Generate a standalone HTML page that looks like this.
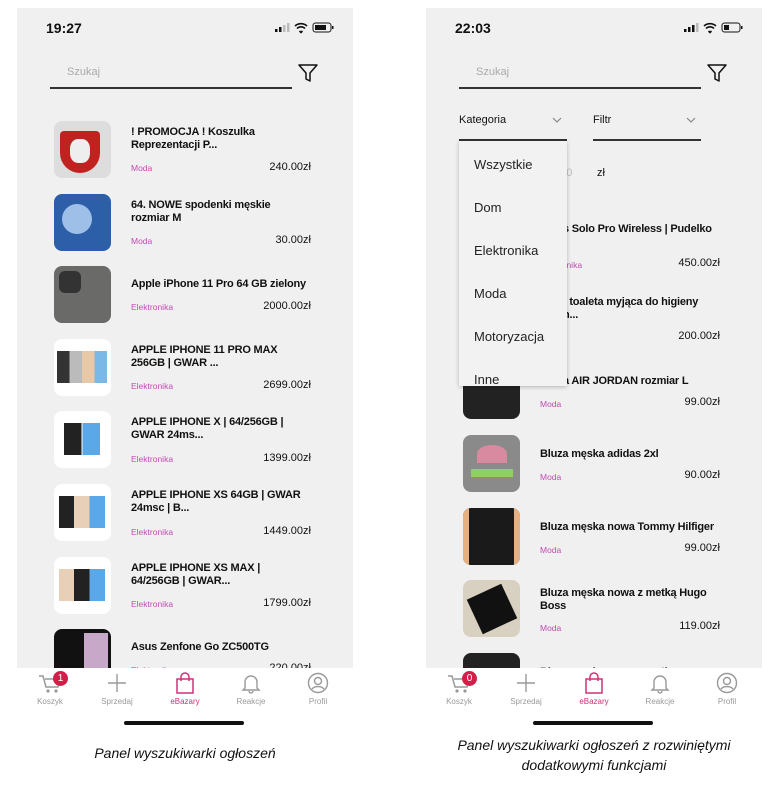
<!DOCTYPE html>
<html><head><meta charset="utf-8"><style>
*{margin:0;padding:0;box-sizing:border-box}
body{width:782px;height:795px;background:#fff;position:relative;overflow:hidden;font-family:"Liberation Sans",sans-serif;color:#111}
.ph{position:absolute;top:8px;width:336px;height:660px;background:#f0f0f0;overflow:hidden}
.a{position:absolute}
.time{font-size:14px;font-weight:bold;top:12px;left:29px}
.srch{font-size:11px;color:#aaa;top:58px;left:50px}
.ul{height:2px;background:#333}
.th{position:absolute;width:57px;height:57px;border-radius:8px;overflow:hidden}
.tt{position:absolute;font-size:11px;font-weight:bold;line-height:13px;width:230px;letter-spacing:-0.2px;white-space:nowrap}
.cat{position:absolute;font-size:8.5px;color:#c04cb4}
.pr{position:absolute;font-size:11px;text-align:right;width:80px}
.tab{position:absolute;top:668px;width:336px;height:60px;background:#fff}
.ti{position:absolute;top:4px;width:50px;text-align:center;font-size:8px;color:#999}
.ti svg{display:block;margin:0 auto 3px}
.hb{position:absolute;top:53px;left:107px;width:120px;height:4px;border-radius:2px;background:#111}
.cap{position:absolute;font-style:italic;font-size:14px;text-align:center;color:#111;white-space:nowrap}
</style></head><body>

<!-- LEFT PHONE -->
<div class="ph" style="left:17px">
 <div class="a time">19:27</div>
 <svg class="a" style="left:258px;top:14px" width="62" height="12"><rect x="0" y="7" width="2.5" height="3" fill="#111"/><rect x="4" y="5" width="2.5" height="5" fill="#111"/><rect x="8" y="3" width="2.5" height="7" fill="#bbb"/><rect x="12" y="1" width="2.5" height="9" fill="#bbb"/><path d="M20 4a9 9 0 0 1 12 0M22 6.5a5.5 5.5 0 0 1 8 0M24.5 9l1.5 1.5 1.5-1.5" stroke="#111" stroke-width="1.6" fill="none"/><rect x="38" y="1" width="18" height="9" rx="2.5" stroke="#111" fill="none"/><rect x="40" y="3" width="11" height="5" fill="#111"/><rect x="57" y="4" width="1.5" height="3" fill="#111"/></svg>
 <div class="a srch">Szukaj</div>
 <div class="a ul" style="left:33px;top:79px;width:242px"></div>
 <svg class="a" style="left:280px;top:54px" width="22" height="22"><path d="M2 3h18l-7 8v8l-4-2v-6z" fill="none" stroke="#111" stroke-width="1.5" stroke-linejoin="round"/></svg>

 <div class="th" style="left:37px;top:113px;background:#ddd"><div class="a" style="left:6px;top:10px;width:40px;height:42px;background:#c0231f;border-radius:4px 4px 20px 20px"></div><div class="a" style="left:16px;top:18px;width:20px;height:24px;background:#eee;border-radius:40%"></div></div>
 <div class="tt" style="left:114px;top:118px">! PROMOCJA ! Koszulka<br>Reprezentacji P...</div>
 <div class="cat" style="left:114px;top:155px">Moda</div><div class="pr" style="left:214px;top:153px">240.00zł</div>

 <div class="th" style="left:37px;top:186px;background:#2d5fa8"><div class="a" style="left:8px;top:10px;width:30px;height:30px;background:#9ec0e8;border-radius:50%"></div></div>
 <div class="tt" style="left:114px;top:191px">64. NOWE spodenki męskie<br>rozmiar M</div>
 <div class="cat" style="left:114px;top:228px">Moda</div><div class="pr" style="left:214px;top:226px">30.00zł</div>

 <div class="th" style="left:37px;top:258px;background:#6a6a68"><div class="a" style="left:5px;top:5px;width:22px;height:22px;background:#333;border-radius:6px"></div></div>
 <div class="tt" style="left:114px;top:270px">Apple iPhone 11 Pro 64 GB zielony</div>
 <div class="cat" style="left:114px;top:294px">Elektronika</div><div class="pr" style="left:214px;top:292px">2000.00zł</div>

 <div class="th" style="left:37px;top:331px;background:#fff"><div class="a" style="left:3px;top:12px;width:50px;height:32px;background:linear-gradient(90deg,#333 0 25%,#bbb 25% 50%,#e9c8a8 50% 75%,#7ab8e8 75%)"></div></div>
 <div class="tt" style="left:114px;top:336px">APPLE IPHONE 11 PRO MAX<br>256GB | GWAR ...</div>
 <div class="cat" style="left:114px;top:373px">Elektronika</div><div class="pr" style="left:214px;top:371px">2699.00zł</div>

 <div class="th" style="left:37px;top:403px;background:#fff"><div class="a" style="left:10px;top:12px;width:36px;height:32px;background:linear-gradient(90deg,#222 0 48%,#fff 48% 52%,#5aa8e8 52%)"></div></div>
 <div class="tt" style="left:114px;top:408px">APPLE IPHONE X | 64/256GB |<br>GWAR 24ms...</div>
 <div class="cat" style="left:114px;top:446px">Elektronika</div><div class="pr" style="left:214px;top:444px">1399.00zł</div>

 <div class="th" style="left:37px;top:476px;background:#fff"><div class="a" style="left:5px;top:12px;width:46px;height:32px;background:linear-gradient(90deg,#222 0 33%,#e8d0b8 33% 66%,#5aa8e8 66%)"></div></div>
 <div class="tt" style="left:114px;top:481px">APPLE IPHONE XS 64GB | GWAR<br>24msc | B...</div>
 <div class="cat" style="left:114px;top:519px">Elektronika</div><div class="pr" style="left:214px;top:517px">1449.00zł</div>

 <div class="th" style="left:37px;top:549px;background:#fff"><div class="a" style="left:5px;top:12px;width:46px;height:32px;background:linear-gradient(90deg,#e8d0b8 0 33%,#222 33% 66%,#5aa8e8 66%)"></div></div>
 <div class="tt" style="left:114px;top:554px">APPLE IPHONE XS MAX |<br>64/256GB | GWAR...</div>
 <div class="cat" style="left:114px;top:591px">Elektronika</div><div class="pr" style="left:214px;top:589px">1799.00zł</div>

 <div class="th" style="left:37px;top:621px;background:#111"><div class="a" style="left:30px;top:4px;width:24px;height:50px;background:#c8a8c8"></div></div>
 <div class="tt" style="left:114px;top:633px">Asus Zenfone Go ZC500TG</div>
 <div class="cat" style="left:114px;top:657px">Elektronika</div><div class="pr" style="left:214px;top:654px">220.00zł</div>
</div>
<div class="tab" style="left:17px">
 <div class="ti" style="left:8px"><svg width="26" height="22"><path d="M2 4h4l3 11h12l2-8H8" fill="none" stroke="#999" stroke-width="1.5"/><circle cx="11" cy="19" r="1.6" fill="#999"/><circle cx="19" cy="19" r="1.6" fill="#999"/></svg>Koszyk</div>
 <div class="a" style="left:36px;top:3px;width:15px;height:15px;border-radius:50%;background:#d0204a;color:#fff;font-size:10px;text-align:center;line-height:15px">1</div>
 <div class="ti" style="left:75px"><svg width="22" height="22"><path d="M11 2v18M2 11h18" stroke="#999" stroke-width="1.4"/></svg>Sprzedaj</div>
 <div class="ti" style="left:143px;color:#d0307a"><svg width="22" height="22"><path d="M3 7h16v14H3z M7 9V5a4 4 0 0 1 8 0v4" fill="none" stroke="#d0307a" stroke-width="1.5"/></svg>eBazary</div>
 <div class="ti" style="left:209px"><svg width="22" height="22"><path d="M5 16V10a6 6 0 0 1 12 0v6l2 2H3z M9 19a2 2 0 0 0 4 0" fill="none" stroke="#999" stroke-width="1.4"/></svg>Reakcje</div>
 <div class="ti" style="left:276px"><svg width="22" height="22"><circle cx="11" cy="11" r="9.5" fill="none" stroke="#999" stroke-width="1.4"/><circle cx="11" cy="9" r="3.5" fill="none" stroke="#999" stroke-width="1.4"/><path d="M5 17a7 5 0 0 1 12 0" fill="none" stroke="#999" stroke-width="1.4"/></svg>Profil</div>
 <div class="hb"></div>
</div>

<!-- RIGHT PHONE -->
<div class="ph" style="left:426px">
 <div class="a time">22:03</div>
 <svg class="a" style="left:258px;top:14px" width="62" height="12"><rect x="0" y="7" width="2.5" height="3" fill="#111"/><rect x="4" y="5" width="2.5" height="5" fill="#111"/><rect x="8" y="3" width="2.5" height="7" fill="#111"/><rect x="12" y="1" width="2.5" height="9" fill="#bbb"/><path d="M20 4a9 9 0 0 1 12 0M22 6.5a5.5 5.5 0 0 1 8 0M24.5 9l1.5 1.5 1.5-1.5" stroke="#111" stroke-width="1.6" fill="none"/><rect x="38" y="1" width="18" height="9" rx="2.5" stroke="#111" fill="none"/><rect x="40" y="3" width="5" height="5" fill="#111"/><rect x="57" y="4" width="1.5" height="3" fill="#111"/></svg>
 <div class="a srch">Szukaj</div>
 <div class="a ul" style="left:33px;top:79px;width:242px"></div>
 <svg class="a" style="left:280px;top:54px" width="22" height="22"><path d="M2 3h18l-7 8v8l-4-2v-6z" fill="none" stroke="#111" stroke-width="1.5" stroke-linejoin="round"/></svg>
 <div class="a" style="left:33px;top:106px;font-size:11px">Kategoria</div>
 <svg class="a" style="left:126px;top:109px" width="10" height="6"><path d="M1 1l4 4 4-4" fill="none" stroke="#888" stroke-width="1.2"/></svg>
 <div class="a ul" style="left:33px;top:131px;width:108px"></div>
 <div class="a" style="left:167px;top:106px;font-size:11px">Filtr</div>
 <svg class="a" style="left:260px;top:109px" width="10" height="6"><path d="M1 1l4 4 4-4" fill="none" stroke="#888" stroke-width="1.2"/></svg>
 <div class="a ul" style="left:167px;top:131px;width:108px"></div>
 <div class="a" style="left:128px;top:159px;font-size:11px;color:#bbb">100</div>
 <div class="a" style="left:171px;top:159px;font-size:11px">zł</div>
 <div class="a ul" style="left:120px;top:178px;width:19px"></div>

 <div class="tt" style="left:137px;top:215px">s Solo Pro Wireless | Pudelko</div>
 <div class="cat" style="left:114px;top:252px">Elektronika</div><div class="pr" style="left:214px;top:249px">450.00zł</div>
 <div class="tt" style="left:137px;top:288px">: toaleta myjąca do higieny<br>n...</div>
 <div class="pr" style="left:214px;top:322px">200.00zł</div>
 <div class="th" style="left:37px;top:354px;background:#222"></div>
 <div class="tt" style="left:137px;top:367px">a AIR JORDAN rozmiar L</div>
 <div class="cat" style="left:114px;top:391px">Moda</div><div class="pr" style="left:214px;top:388px">99.00zł</div>

 <div class="th" style="left:37px;top:427px;background:#8a8a8a"><div class="a" style="left:8px;top:34px;width:42px;height:8px;background:#8fd060"></div><div class="a" style="left:14px;top:10px;width:30px;height:18px;background:#d88aa0;border-radius:50% 50% 0 0"></div></div>
 <div class="tt" style="left:114px;top:440px">Bluza męska adidas 2xl</div>
 <div class="cat" style="left:114px;top:464px">Moda</div><div class="pr" style="left:214px;top:461px">90.00zł</div>

 <div class="th" style="left:37px;top:500px;background:#1a1a1a"><div class="a" style="left:0;top:0;width:6px;height:57px;background:#e8b080"></div><div class="a" style="right:0;top:0;width:6px;height:57px;background:#e8b080"></div></div>
 <div class="tt" style="left:114px;top:513px">Bluza męska nowa Tommy Hilfiger</div>
 <div class="cat" style="left:114px;top:537px">Moda</div><div class="pr" style="left:214px;top:534px">99.00zł</div>

 <div class="th" style="left:37px;top:572px;background:#d8d0c0"><div class="a" style="left:10px;top:10px;width:38px;height:38px;background:#111;transform:rotate(-25deg)"></div></div>
 <div class="tt" style="left:114px;top:579px">Bluza męska nowa z metką Hugo<br>Boss</div>
 <div class="cat" style="left:114px;top:615px">Moda</div><div class="pr" style="left:214px;top:612px">119.00zł</div>

 <div class="th" style="left:37px;top:645px;background:#222"></div>
 <div class="tt" style="left:114px;top:658px;color:#555">Bluza męska nowa z metką</div>

 <div class="a" style="left:33px;top:133px;width:108px;height:245px;background:#f2f2f2;box-shadow:0 1px 4px rgba(0,0,0,.25);font-size:13px;color:#222">
  <div class="a" style="left:15px;top:16px">Wszystkie</div>
  <div class="a" style="left:15px;top:59px">Dom</div>
  <div class="a" style="left:15px;top:102px">Elektronika</div>
  <div class="a" style="left:15px;top:145px">Moda</div>
  <div class="a" style="left:15px;top:188px">Motoryzacja</div>
  <div class="a" style="left:15px;top:231px">Inne</div>
 </div>
</div>
<div class="tab" style="left:426px">
 <div class="ti" style="left:8px"><svg width="26" height="22"><path d="M2 4h4l3 11h12l2-8H8" fill="none" stroke="#999" stroke-width="1.5"/><circle cx="11" cy="19" r="1.6" fill="#999"/><circle cx="19" cy="19" r="1.6" fill="#999"/></svg>Koszyk</div>
 <div class="a" style="left:36px;top:3px;width:15px;height:15px;border-radius:50%;background:#d0204a;color:#fff;font-size:10px;text-align:center;line-height:15px">0</div>
 <div class="ti" style="left:75px"><svg width="22" height="22"><path d="M11 2v18M2 11h18" stroke="#999" stroke-width="1.4"/></svg>Sprzedaj</div>
 <div class="ti" style="left:143px;color:#d0307a"><svg width="22" height="22"><path d="M3 7h16v14H3z M7 9V5a4 4 0 0 1 8 0v4" fill="none" stroke="#d0307a" stroke-width="1.5"/></svg>eBazary</div>
 <div class="ti" style="left:209px"><svg width="22" height="22"><path d="M5 16V10a6 6 0 0 1 12 0v6l2 2H3z M9 19a2 2 0 0 0 4 0" fill="none" stroke="#999" stroke-width="1.4"/></svg>Reakcje</div>
 <div class="ti" style="left:276px"><svg width="22" height="22"><circle cx="11" cy="11" r="9.5" fill="none" stroke="#999" stroke-width="1.4"/><circle cx="11" cy="9" r="3.5" fill="none" stroke="#999" stroke-width="1.4"/><path d="M5 17a7 5 0 0 1 12 0" fill="none" stroke="#999" stroke-width="1.4"/></svg>Profil</div>
 <div class="hb"></div>
</div>

<div class="cap" style="left:17px;top:745px;width:336px">Panel wyszukiwarki ogłoszeń</div>
<div class="cap" style="left:410px;top:735px;width:368px;line-height:20px">Panel wyszukiwarki ogłoszeń z rozwiniętymi<br>dodatkowymi funkcjami</div>
</body></html>
